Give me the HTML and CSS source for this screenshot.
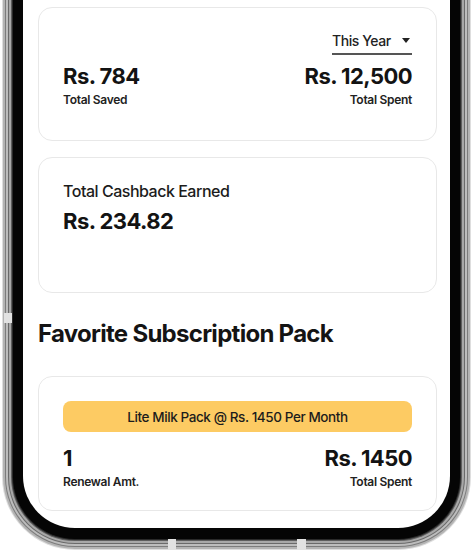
FILE: index.html
```html
<!DOCTYPE html>
<html>
<head>
<meta charset="utf-8">
<link rel="stylesheet" href="styles.css">
</head>
<body>
<div class="device">
  <div class="bezel">
    <div class="screen">
      <section class="card card-summary">
        <div class="dropdown">
          <span>This Year</span>
          <svg class="caret" width="8" height="5" viewBox="0 0 8 5"><path d="M0 0h8L4 5z" fill="#222"/></svg>
        </div>
        <div class="stats">
          <div class="stat">
            <div class="amount">Rs. 784</div>
            <div class="label">Total Saved</div>
          </div>
          <div class="stat right">
            <div class="amount">Rs. 12,500</div>
            <div class="label">Total Spent</div>
          </div>
        </div>
      </section>
      <section class="card card-cashback">
        <div class="title">Total Cashback Earned</div>
        <div class="amount">Rs. 234.82</div>
      </section>
      <h2 class="heading">Favorite Subscription Pack</h2>
      <section class="card card-pack">
        <div class="pill">Lite Milk Pack @ Rs. 1450 Per Month</div>
        <div class="stats">
          <div class="stat">
            <div class="amount">1</div>
            <div class="label">Renewal Amt.</div>
          </div>
          <div class="stat right">
            <div class="amount">Rs. 1450</div>
            <div class="label">Total Spent</div>
          </div>
        </div>
      </section>
    </div>
  </div>
  <span class="band band-left"></span>
  <span class="band band-b1"></span>
  <span class="band band-b2"></span>
</div>
</body>
</html>
```

FILE: styles.css
```css
html, body {
  margin: 0;
  padding: 0;
  background: #ffffff;
  overflow: hidden;
}
body {
  font-family: Inter, "Noto Sans", sans-serif;
  color: #161616;
}
.device {
  position: relative;
  width: 474px;
  height: 550px;
}
.bezel {
  margin: 0 14px 0 13px;
  height: 539px;
  box-sizing: border-box;
  padding: 0 10px 11px 10px;
  background: #050505;
  border-radius: 0 0 62px 62px;
  box-shadow:
    0 0 0 1px #2a2a2a,
    0 0 0 2px #5e5e5e,
    0 0 0 4px #a8a8a8,
    0 0 0 5px #6a6a6a,
    0 0 0 7px #bdbdbd,
    0 0 0 8px #7c7c7c,
    0 0 0 10px #b4b4b4,
    0 0 0 11px #dedede;
}
.screen {
  height: 100%;
  box-sizing: border-box;
  background: #ffffff;
  border-radius: 0 0 52px 52px;
  overflow: hidden;
  padding: 7px 13px 0 15px;
  display: flex;
  flex-direction: column;
}
.card {
  border: 1px solid #e8e8e8;
  border-radius: 14px;
  box-sizing: border-box;
  background: #fff;
  padding: 0 24px;
  display: flex;
  flex-direction: column;
}
.card-summary {
  height: 134px;
  padding-top: 24px;
}
.dropdown {
  align-self: flex-end;
  width: 80px;
  display: flex;
  justify-content: space-between;
  align-items: center;
  font-size: 14px;
  line-height: 17px;
  font-weight: 500;
  letter-spacing: -0.03em;
  color: #222;
  border-bottom: 2px solid #555;
  padding-bottom: 4px;
}
.caret {
  margin-right: 2px;
}
.stats {
  display: flex;
  justify-content: space-between;
}
.card-summary .stats {
  margin-top: 8px;
}
.stat.right {
  text-align: right;
}
.amount {
  font-size: 22px;
  line-height: 26px;
  font-weight: 700;
  letter-spacing: -0.025em;
  color: #131313;
}
.label {
  font-size: 12px;
  line-height: 15px;
  font-weight: 600;
  letter-spacing: -0.025em;
  color: #222;
  margin-top: 3px;
}
.card-cashback {
  margin-top: 16px;
  height: 136px;
  padding-top: 23px;
}
.title {
  font-size: 16px;
  line-height: 20px;
  font-weight: 500;
  letter-spacing: -0.03em;
  color: #1c1c1c;
}
.card-cashback .amount {
  margin-top: 7px;
}
.heading {
  margin: 26px 0 0 0;
  font-size: 24px;
  line-height: 30px;
  font-weight: 700;
  letter-spacing: -0.03em;
  color: #141414;
}
.card-pack {
  margin-top: 27px;
  height: 135px;
  padding-top: 24px;
}
.pill {
  height: 31px;
  border-radius: 8px;
  background: #fdcb63;
  display: flex;
  align-items: center;
  justify-content: center;
  font-size: 13.5px;
  font-weight: 500;
  letter-spacing: -0.03em;
  color: #1c1c1c;
}
.card-pack .stats {
  margin-top: 13px;
}
.band {
  position: absolute;
  background: #e2e2e2;
}
.band-left {
  left: 4px;
  top: 313px;
  width: 8px;
  height: 10px;
}
.band-b1 {
  left: 168px;
  top: 539px;
  width: 8px;
  height: 11px;
}
.band-b2 {
  left: 297px;
  top: 539px;
  width: 9px;
  height: 11px;
}
```
